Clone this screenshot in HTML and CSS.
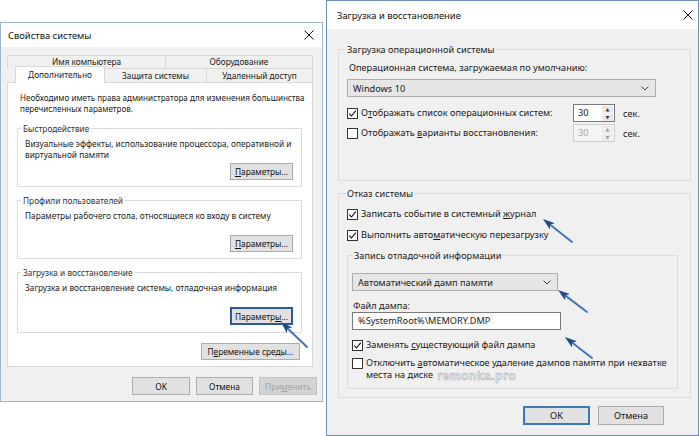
FILE: index.html
```html
<!DOCTYPE html>
<html lang="ru">
<head>
<meta charset="utf-8">
<title>Свойства системы</title>
<link rel="stylesheet" href="styles.css">
</head>
<body>
<div class="stage">
  <section class="dlg dlg-left">
    <header class="titlebar">
      <span class="title">Свойства системы</span>
      <svg class="close" width="10" height="10" viewBox="0 0 10 10"><path d="M0.5 0.5 L9.5 9.5 M9.5 0.5 L0.5 9.5" stroke="#111" stroke-width="1" fill="none"/></svg>
    </header>
    <div class="dlg-body">
      <div class="tabs">
        <div class="tabrow row1">
          <div class="tab t-name">Имя компьютера</div>
          <div class="tab t-hw">Оборудование</div>
        </div>
        <div class="tabrow row2">
          <div class="tab t-adv active">Дополнительно</div>
          <div class="tab t-prot">Защита системы</div>
          <div class="tab t-remote">Удаленный доступ</div>
        </div>
      </div>
      <div class="panel">
        <p class="note">Необходимо иметь права администратора для изменения большинства<br>перечисленных параметров.</p>
        <div class="group g1">
          <div class="gtitle">Быстродействие</div>
          <p class="gtext">Визуальные эффекты, использование процессора, оперативной и<br>виртуальной памяти</p>
          <div class="btn btn-param"><u>П</u>араметры...</div>
        </div>
        <div class="group g2">
          <div class="gtitle">Профили пользователей</div>
          <p class="gtext">Параметры рабочего стола, относящиеся ко входу в систему</p>
          <div class="btn btn-param"><u>П</u>араметры...</div>
        </div>
        <div class="group g3">
          <div class="gtitle">Загрузка и восстановление</div>
          <p class="gtext">Загрузка и восстановление системы, отладочная информация</p>
          <div class="btn btn-param focus">Параметр<u>ы</u>...</div>
        </div>
        <div class="env-row">
          <div class="btn btn-env">П<u>е</u>ременные среды...</div>
        </div>
      </div>
      <div class="footer footer-left">
        <div class="btn btn-ok-l">OK</div>
        <div class="btn btn-cancel-l">Отмена</div>
        <div class="btn btn-apply disabled">При<u>м</u>енить</div>
      </div>
    </div>
  </section>

  <section class="dlg dlg-right">
    <header class="titlebar titlebar-r">
      <span class="title">Загрузка и восстановление</span>
      <svg class="close" width="10" height="10" viewBox="0 0 10 10"><path d="M0.5 0.5 L9.5 9.5 M9.5 0.5 L0.5 9.5" stroke="#111" stroke-width="1" fill="none"/></svg>
    </header>
    <div class="dlg-body-r">
      <div class="rgroup os">
        <div class="rtitle">Загрузка операционной системы</div>
        <div class="rlabel">Операционная система, загружаемая по умолчанию:</div>
        <div class="select sel-os"><span>Windows 10</span>
          <svg width="8" height="5" viewBox="0 0 8 5"><path d="M0.5 0.5 L4 4 L7.5 0.5" stroke="#444" stroke-width="1" fill="none"/></svg>
        </div>
        <div class="crow spinrow first">
          <span class="cb checked"><svg width="9" height="9" viewBox="0 0 9 9"><path d="M1.2 4.6 L3.5 7 L7.8 1.6" stroke="#111" stroke-width="1.1" fill="none"/></svg></span>
          <span class="clabel wide">О<u>т</u>ображать список операционных систем:</span>
          <div class="spin"><span class="val">30</span><span class="arrows"><span class="ar">▲</span><span class="ar">▼</span></span></div>
          <span class="sec">сек.</span>
        </div>
        <div class="crow spinrow second">
          <span class="cb"></span>
          <span class="clabel wide">Отображать <u>в</u>арианты восстановления:</span>
          <div class="spin disabled"><span class="val">30</span><span class="arrows"><span class="ar">▲</span><span class="ar">▼</span></span></div>
          <span class="sec">сек.</span>
        </div>
      </div>

      <div class="rgroup fail">
        <div class="rtitle">Отказ системы</div>
        <div class="crow r-log">
          <span class="cb checked"><svg width="9" height="9" viewBox="0 0 9 9"><path d="M1.2 4.6 L3.5 7 L7.8 1.6" stroke="#111" stroke-width="1.1" fill="none"/></svg></span>
          <span class="clabel">Записать событие в системный <u>ж</u>урнал</span>
        </div>
        <div class="crow r-reboot">
          <span class="cb checked"><svg width="9" height="9" viewBox="0 0 9 9"><path d="M1.2 4.6 L3.5 7 L7.8 1.6" stroke="#111" stroke-width="1.1" fill="none"/></svg></span>
          <span class="clabel">Выполнить авто<u>м</u>атическую перезагрузку</span>
        </div>
        <div class="rgroup inner">
          <div class="rtitle">Запись отладочной информации</div>
          <div class="select sel-dump"><span>Автоматический дамп памяти</span>
            <svg width="8" height="5" viewBox="0 0 8 5"><path d="M0.5 0.5 L4 4 L7.5 0.5" stroke="#444" stroke-width="1" fill="none"/></svg>
          </div>
          <div class="rlabel flabel">Файл дампа:</div>
          <div class="textbox">%SystemRoot%\MEMORY.DMP</div>
          <div class="crow r-replace">
            <span class="cb checked"><svg width="9" height="9" viewBox="0 0 9 9"><path d="M1.2 4.6 L3.5 7 L7.8 1.6" stroke="#111" stroke-width="1.1" fill="none"/></svg></span>
            <span class="clabel">Заменять <u>с</u>уществующий файл дампа</span>
          </div>
          <div class="crow r-disable">
            <span class="cb"></span>
            <span class="clabel">Отключить <u>а</u>втоматическое удаление дампов памяти при нехватке<br>места на диске<span class="wm">remonka.pro</span></span>
          </div>
        </div>
      </div>

      <div class="footer footer-right">
        <div class="btn btn-ok-r focus-r">OK</div>
        <div class="btn btn-cancel-r">Отмена</div>
      </div>
    </div>
  </section>

  <svg class="arrows-overlay" width="700" height="436" viewBox="0 0 700 436">
    <defs>
      <marker id="ah" viewBox="0 0 12 8" refX="6" refY="4" markerWidth="12" markerHeight="8" markerUnits="userSpaceOnUse" orient="auto">
        <path d="M0 0 L12 4 L0 8 L3 4 Z" fill="#1f4d8a"/>
      </marker>
    </defs>
    <g stroke="#4275b8" stroke-width="2" fill="none" stroke-linecap="round" marker-end="url(#ah)">
      <path d="M307 347 L285.3 326.2"/>
      <path d="M572 242 L547.7 222.7"/>
      <path d="M587 312 L562.8 293.6"/>
      <path d="M592 358 L569.7 340.7"/>
    </g>
  </svg>
</div>
</body>
</html>
```

FILE: styles.css
```css
* { box-sizing: border-box; }
html, body { margin: 0; padding: 0; background: #ffffff; }
body {
  font-family: "Noto Sans", "Open Sans", "DejaVu Sans", sans-serif;
  color: #1a1a1a;
  width: 700px;
  height: 436px;
  overflow: hidden;
}
p { margin: 0; }
u { text-decoration: underline; text-underline-offset: 1px; }

.stage {
  position: relative;
  width: 700px;
  height: 436px;
  display: flex;
  align-items: flex-start;
}

.dlg { background: #f0f0f0; display: flex; flex-direction: column; }

/* ---------- left dialog ---------- */
.dlg-left {
  width: 323px;
  height: 380px;
  margin-top: 22px;
  border: 1px solid #9fb5d2;
  font-size: 8.3px;
}
.titlebar {
  height: 24px;
  background: #ffffff;
  display: flex;
  align-items: center;
  justify-content: space-between;
  padding: 0 8px 0 7px;
  font-size: 9.4px;
  color: #111;
}
.dlg-body { padding: 8px 8px 0 6px; display: flex; flex-direction: column; }

.tabrow { display: flex; }
.row1 { height: 13px; }
.row2 { height: 14px; align-items: flex-start; padding-left: 8px; }
.tab {
  border: 1px solid #d9d9d9;
  border-bottom: none;
  background: #f0f0f0;
  text-align: center;
  line-height: 12px;
  color: #222;
  white-space: nowrap;
}
.row1 .tab { height: 13px; }
.t-name { width: 159px; }
.t-hw { width: 147px; border-left: none; }
.row2 .tab { height: 14px; line-height: 13px; }
.t-adv { width: 90px; }
.t-prot { width: 102px; border-left: none; }
.t-remote { width: 106px; border-left: none; }
.row2 .tab.active {
  height: 17px;
  margin-top: -2px;
  background: #ffffff;
  position: relative;
  z-index: 1;
  line-height: 15px;
}

.panel {
  width: 306px;
  height: 285px;
  background: #ffffff;
  border: 1px solid #d9d9d9;
  padding: 9px 10px 0 9px;
  display: flex;
  flex-direction: column;
}
.note { line-height: 11px; padding-left: 3px; color: #222; white-space: nowrap; font-size: 8.05px; flex: none; }

.group {
  border: 1px solid #dcdcdc;
  height: 59px;
  margin-top: 13px;
  padding: 0 8px 6px 7px;
  display: flex;
  flex-direction: column;
  flex: none;
}
.g1 { margin-top: 14px; }
.g3 { height: 61px; padding-bottom: 7px; }
.gtitle {
  align-self: flex-start;
  margin: -6px 0 0 -4px;
  padding: 0 2px;
  background: #ffffff;
  line-height: 11px;
  height: 11px;
  color: #333;
  white-space: nowrap;
}
.gtext { margin-top: 4px; line-height: 11px; color: #222; white-space: nowrap; }

.btn {
  display: flex;
  align-items: center;
  justify-content: center;
  background: #e1e1e1;
  border: 1px solid #adadad;
  color: #111;
  white-space: nowrap;
  flex: none;
}
.btn-param { margin-top: auto; align-self: flex-end; width: 63px; height: 17px; }
.btn-param.focus { border: 2px solid #2c5a98; height: 18px; }
.env-row { display: flex; justify-content: flex-end; padding-right: 2px; margin-top: 10px; flex: none; }
.btn-env { width: 99px; height: 17px; }

.footer { display: flex; justify-content: flex-end; }
.footer-left { gap: 6px; padding-top: 10px; margin-right: -3px; }
.footer-left .btn { height: 18px; }
.btn-ok-l { width: 58px; }
.btn-cancel-l { width: 57px; }
.btn-apply { width: 58px; }
.btn.disabled { background: #d4d4d4; border-color: #c4c4c4; color: #a3a3a3; }

/* ---------- right dialog ---------- */
.dlg-right {
  width: 373px;
  height: 436px;
  margin-left: 3px;
  border: 1px solid #6d8fbd;
  font-size: 9.2px;
}
.titlebar-r { height: 28px; padding: 0 5px 0 10px; font-size: 9.4px; }
.dlg-body-r { padding: 20px 7px 0 11px; display: flex; flex-direction: column; }

.rgroup {
  border: 1px solid #dcdcdc;
  display: flex;
  flex-direction: column;
  padding: 0 0 0 8px;
  flex: none;
}
.rtitle {
  align-self: flex-start;
  margin: -7px 0 0 -1px;
  padding: 0 1px;
  background: #f0f0f0;
  height: 13px;
  line-height: 13px;
  color: #222;
  white-space: nowrap;
}
.rlabel { line-height: 13px; padding-left: 2px; color: #1a1a1a; }
.os { height: 132px; }
.os .rlabel { margin-top: 5px; }

.select {
  height: 18px;
  border: 1px solid #adadad;
  background: #e6e6e6;
  display: flex;
  align-items: center;
  justify-content: space-between;
  padding: 0 6px 0 5px;
  color: #1a1a1a;
  flex: none;
}
.sel-os { width: 309px; margin-top: 5px; }

.crow { display: flex; align-items: center; flex: none; }
.cb {
  width: 11px;
  height: 11px;
  border: 1px solid #333;
  background: #fff;
  display: flex;
  align-items: center;
  justify-content: center;
  flex: none;
}
.clabel { margin-left: 3px; line-height: 12px; color: #1a1a1a; white-space: nowrap; }
.clabel.wide { width: 212px; }
.spinrow { height: 18px; }
.spinrow.first { margin-top: 7px; }
.spinrow.second { margin-top: 2px; }
.spin {
  width: 42px;
  height: 18px;
  border: 1px solid #7a7a7a;
  background: #fff;
  display: flex;
  align-items: stretch;
}
.spin .val { flex: 1; padding-left: 4px; line-height: 16px; }
.spin .arrows {
  width: 11px;
  display: flex;
  flex-direction: column;
  margin: 1px 1px 1px 0;
}
.spin .ar {
  flex: 1;
  font-size: 4.5px;
  line-height: 7px;
  text-align: center;
  background: #e8e8e8;
  color: #333;
}
.spin .ar + .ar { margin-top: 1px; }
.spin.disabled { border-color: #cfcfcf; background: #f4f4f4; color: #a6a6a6; }
.spin.disabled .ar { color: #9a9a9a; background: #ececec; }
.sec { margin-left: 8px; }

.fail { height: 205px; margin-top: 12px; padding-right: 12px; }
.r-log { margin-top: 7px; height: 14px; }
.r-reboot { margin-top: 7px; height: 14px; }

.inner { height: 134px; margin-top: 13px; padding-left: 4px; }
.inner .rtitle { margin-left: 1px; }
.sel-dump { width: 206px; margin-top: 11px; }
.flabel { margin-top: 9px; padding-left: 1px; line-height: 12px; }
.textbox {
  width: 209px;
  height: 18px;
  border: 1px solid #7a7a7a;
  background: #fff;
  padding-left: 5px;
  line-height: 16px;
  flex: none;
}
.r-replace { margin-top: 8px; height: 14px; }
.r-disable { margin-top: 5px; align-items: flex-start; }
.r-disable .cb { margin-top: 1px; }
.wm {
  display: inline-block;
  font-family: "Liberation Sans", sans-serif;
  font-size: 12px;
  letter-spacing: 0.6px;
  font-weight: bold;
  color: #f3f3f3;
  -webkit-text-stroke: 0.7px #b9b9b9;
  margin-left: 4px;
  height: 12px;
  line-height: 12px;
  vertical-align: top;
  margin-top: 1px;
}

.footer-right { gap: 8px; margin-top: 8px; padding-right: 27px; }
.footer-right .btn { height: 19px; }
.btn-ok-r { width: 67px; }
.btn-cancel-r { width: 66px; }
.btn.focus-r { border: 2px solid #3b78b5; }

.arrows-overlay { position: absolute; left: 0; top: 0; pointer-events: none; }
```
